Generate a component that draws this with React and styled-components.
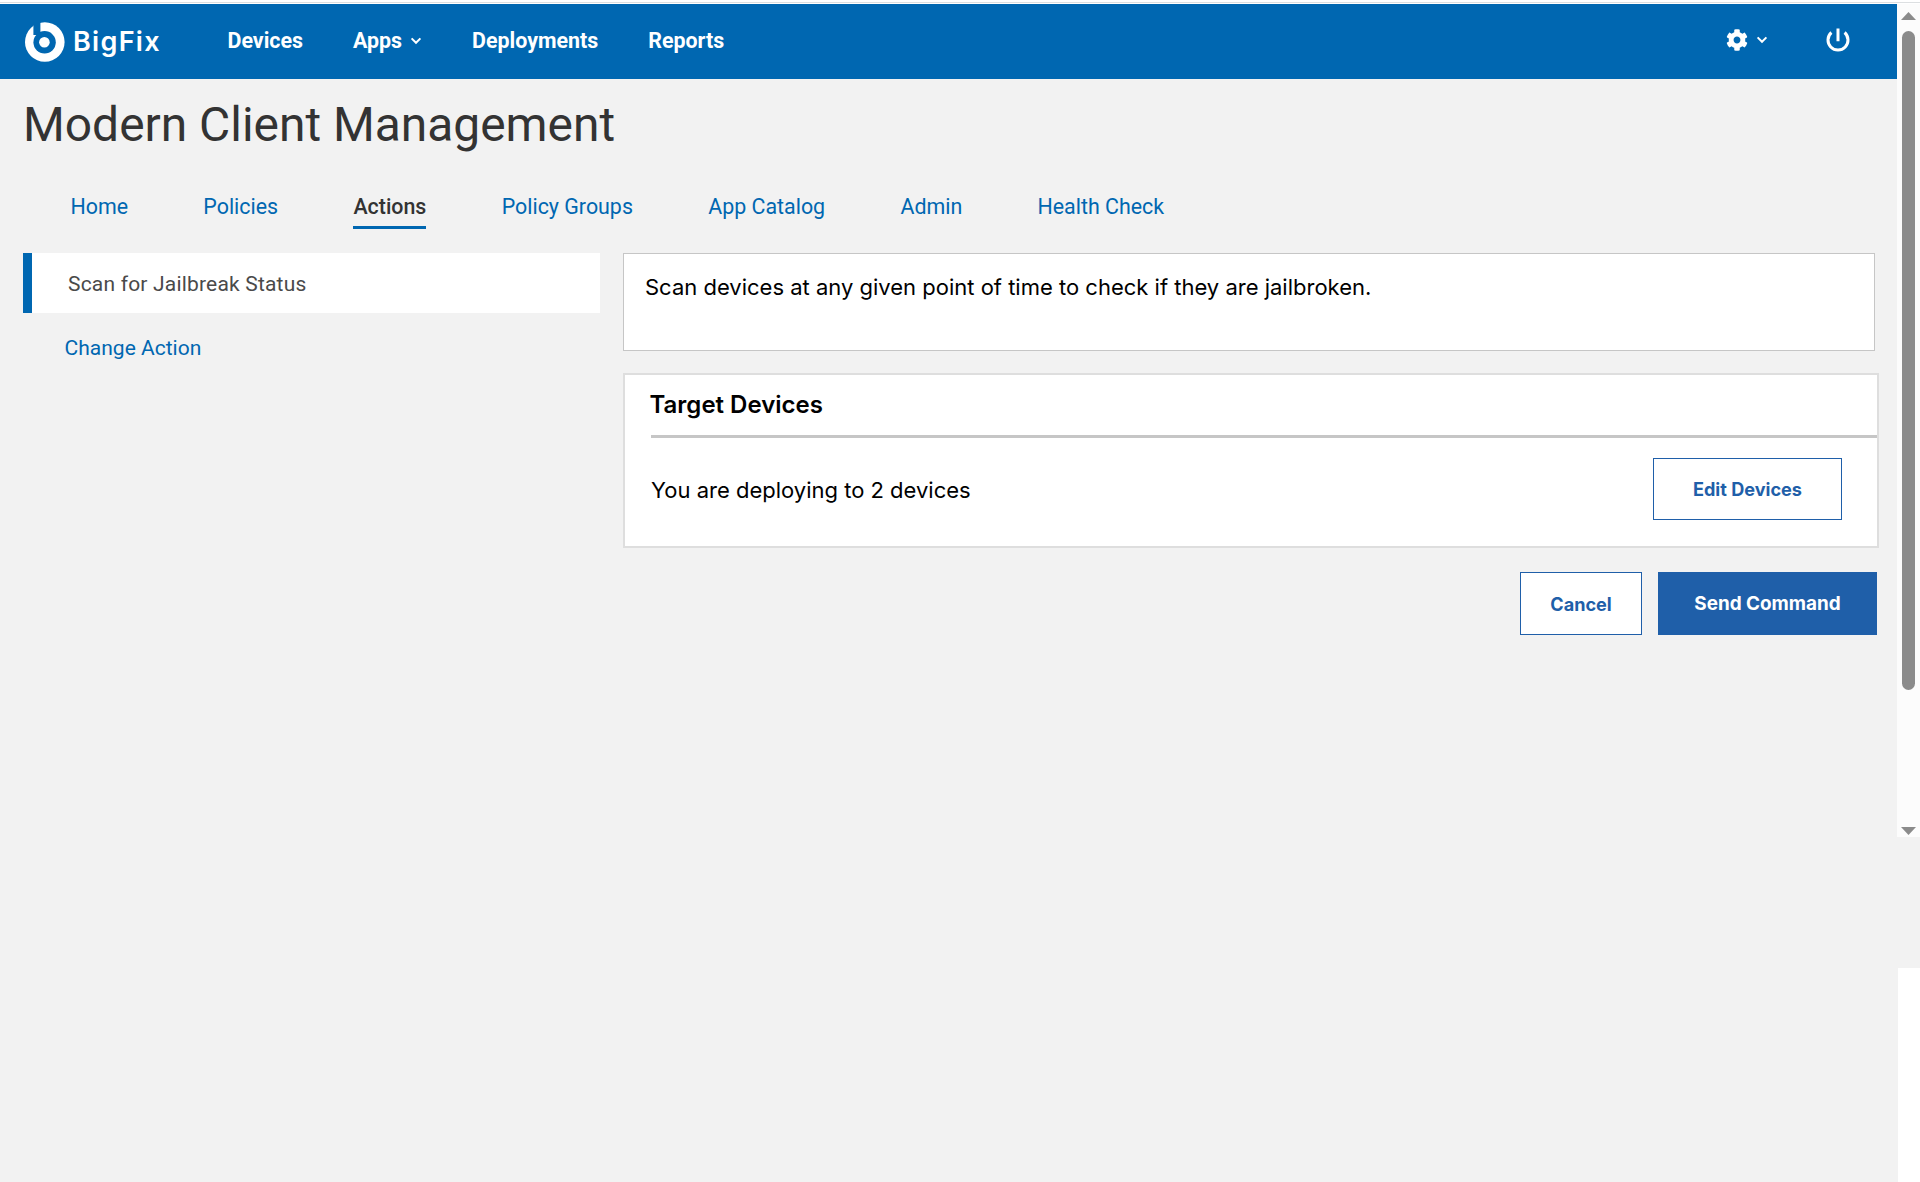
import React from "react";
import styled, { createGlobalStyle } from "styled-components";
import { FaCog } from "react-icons/fa";

const tabs = [
  "Home",
  "Policies",
  "Actions",
  "Policy Groups",
  "App Catalog",
  "Admin",
  "Health Check",
];

const Chevron = () => (
  <svg width="12" height="8" viewBox="0 0 12 8" fill="none">
    <path d="M1.6 1.4 6 5.8l4.4-4.4" stroke="#fff" strokeWidth="2" />
  </svg>
);

const Power = () => (
  <svg width="30" height="30" viewBox="0 0 30 30" fill="none">
    <path
      d="M21.6 7.5A10 10 0 1 1 8.4 7.5M15 3.5v12.7"
      stroke="#fff"
      strokeWidth="3"
    />
  </svg>
);

const LogoMark = () => (
  <svg width="40" height="40" viewBox="0 0 40 40">
    <circle cx="19.8" cy="20" r="19.8" fill="#fff" />
    <path d="M8.4 0h7v13h-7z" fill="#0067b1" />
    <circle cx="19.6" cy="20.3" r="11.2" fill="#0067b1" />
    <circle cx="19.4" cy="20.3" r="5.3" fill="#fff" />
  </svg>
);

const App = () => {
  return (
    <>
      <GlobalStyle />
      <TopLine />
      <Window>
        <Page>
          <Header>
            <Logo>
              <LogoMark />
              <span>BigFix</span>
            </Logo>
            <Nav>
              <NavLink>Devices</NavLink>
              <NavLink>
                Apps <Chevron />
              </NavLink>
              <NavLink>Deployments</NavLink>
              <NavLink>Reports</NavLink>
            </Nav>
            <HeaderIcons>
              <Settings title="Settings">
                <FaCog size={22} />
                <Chevron />
              </Settings>
              <Power />
            </HeaderIcons>
          </Header>

          <Title>Modern Client Management</Title>

          <Tabs>
            {tabs.map((tab) => (
              <Tab key={tab} $active={tab === "Actions"}>
                {tab}
              </Tab>
            ))}
          </Tabs>

          <Content>
            <Side>
              <SideItem>Scan for Jailbreak Status</SideItem>
              <SideLink>Change Action</SideLink>
            </Side>
            <Main>
              <Description>
                Scan devices at any given point of time to check if they are
                jailbroken.
              </Description>
              <Target>
                <TargetTitle>Target Devices</TargetTitle>
                <TargetBody>
                  <p>You are deploying to 2 devices</p>
                  <Button $width={189} $height={62}>
                    Edit Devices
                  </Button>
                </TargetBody>
              </Target>
              <Buttons>
                <Button $width={122}>Cancel</Button>
                <Button $width={219} $primary>
                  Send Command
                </Button>
              </Buttons>
            </Main>
          </Content>
        </Page>

        <Gutter>
          <ScrollBar>
            <Arrow />
            <Thumb />
            <Arrow $down />
          </ScrollBar>
          <Blank />
        </Gutter>
      </Window>
    </>
  );
};

const GlobalStyle = createGlobalStyle`
  * {
    box-sizing: border-box;
  }
  body {
    margin: 0;
    background-color: #fff;
    font-family: Roboto, sans-serif;
  }
  h1, h2, p {
    margin: 0;
  }
`;

const TopLine = styled.div`
  height: 3px;
  margin-bottom: 1px;
  border-bottom: 1px solid #dcdfe1;
`;

const Window = styled.div`
  display: flex;
  height: 1178px;
  background-color: #f2f2f2;
  overflow: hidden;
`;

const Page = styled.div`
  flex: 1;
  min-width: 0;
`;

const Header = styled.header`
  display: flex;
  align-items: center;
  height: 75px;
  padding-left: 25px;
  color: #fff;
  background-color: #0067b1;
`;

const Logo = styled.div`
  display: flex;
  align-items: center;
  width: 202.5px;
  font-family: Inter, sans-serif;
  font-size: 27px;
  font-weight: 600;
  line-height: 40px;
  letter-spacing: 1.3px;
  span {
    margin-left: 8px;
  }
`;

const Nav = styled.nav`
  display: flex;
  gap: 50px;
  padding-bottom: 2px;
`;

const NavLink = styled.a`
  display: flex;
  align-items: center;
  gap: 8px;
  font-size: 21.4px;
  font-weight: 700;
  line-height: 26px;
`;

const HeaderIcons = styled.div`
  display: flex;
  align-items: center;
  gap: 55px;
  margin-left: auto;
  margin-right: 44px;
  padding-bottom: 3px;
`;

const Settings = styled.div`
  display: flex;
  align-items: center;
  gap: 8px;
`;

const Title = styled.h1`
  margin: 18px 0 0 23px;
  color: #333;
  font-size: 47.9px;
  font-weight: 400;
  line-height: 56px;
`;

const Tabs = styled.nav`
  display: flex;
  gap: 75.3px;
  margin: 42px 0 24px 70.5px;
`;

const Tab = styled.a`
  padding-bottom: 7px;
  color: ${({ $active }) => ($active ? "#333" : "#0067b1")};
  font-size: 21.4px;
  font-weight: ${({ $active }) => ($active ? 500 : 400)};
  line-height: 24px;
  border-bottom: 3px solid ${({ $active }) => ($active ? "#0067b1" : "transparent")};
`;

const Content = styled.div`
  display: grid;
  grid-template-columns: 577px 1fr;
  gap: 23px;
  padding: 0 18px 0 23px;
`;

const Side = styled.aside`
  display: flex;
  flex-direction: column;
  font-size: 21px;
  line-height: 24px;
`;

const SideItem = styled.div`
  padding: 19px 0 17px 36px;
  color: #4a4a4a;
  background-color: #fff;
  border-left: 9px solid #0067b1;
  letter-spacing: 0.19px;
`;

const SideLink = styled.a`
  margin: 23px 0 0 41.6px;
  color: #0067b1;
`;

const Main = styled.main`
  color: #000;
  font-family: Inter, sans-serif;
  font-size: 22px;
  line-height: 28px;
`;

const Description = styled.p`
  height: 98px;
  margin-right: 4px;
  padding: 19px 21px;
  background-color: #fff;
  border: 1px solid #c6c6c6;
`;

const Target = styled.section`
  margin-top: 22px;
  padding-left: 26px;
  background-color: #fff;
  border: 2px solid #dedede;
`;

const TargetTitle = styled.h2`
  height: 63px;
  padding-top: 15px;
  font-size: 24px;
  font-weight: 600;
  line-height: 30px;
  text-indent: -1.5px;
  border-bottom: 3px solid #c6c6c6;
`;

const TargetBody = styled.div`
  display: flex;
  justify-content: space-between;
  align-items: center;
  height: 108px;
  padding: 0 35px 6px 0;
  p {
    padding-top: 1px;
  }
`;

const Button = styled.button`
  width: ${({ $width }) => $width}px;
  height: ${({ $height }) => $height || 63}px;
  padding: 0;
  color: ${({ $primary }) => ($primary ? "#fff" : "#1f5fa9")};
  background-color: ${({ $primary }) => ($primary ? "#1f5fa9" : "#fff")};
  border: 1px solid #1f5fa9;
  font-family: inherit;
  font-size: ${({ $primary }) => ($primary ? 18.9 : 18.1)}px;
  font-weight: 700;
`;

const Buttons = styled.div`
  display: flex;
  justify-content: flex-end;
  gap: 16px;
  margin: 24px 2px 0 0;
`;

const Gutter = styled.div`
  display: flex;
  flex-direction: column;
  align-items: flex-end;
  justify-content: space-between;
  width: 23px;
`;

const ScrollBar = styled.div`
  display: flex;
  flex-direction: column;
  align-items: center;
  width: 23px;
  height: 833px;
  padding: 8px 0 2px;
  background-color: #fcfcfc;
`;

const Arrow = styled.div`
  width: 15px;
  height: 8px;
  margin-top: ${({ $down }) => ($down ? "auto" : 0)};
  background-color: #8b8b8b;
  clip-path: ${({ $down }) =>
    $down ? "polygon(0 0, 100% 0, 50% 100%)" : "polygon(50% 0, 100% 100%, 0 100%)"};
`;

const Thumb = styled.div`
  width: 13px;
  height: 659px;
  margin-top: 11px;
  background-color: #8b8b8b;
  border-radius: 7px;
`;

const Blank = styled.div`
  width: 22px;
  height: 214px;
  background-color: #fff;
`;

export default App;
